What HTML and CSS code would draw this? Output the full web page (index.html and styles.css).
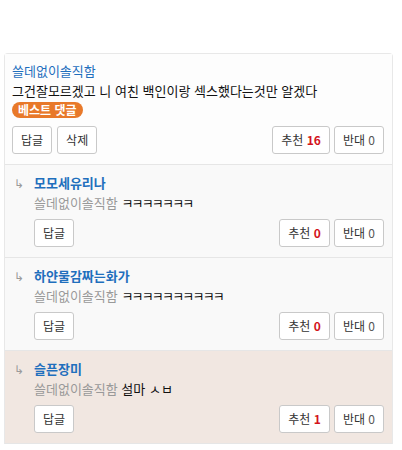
FILE: index.html
```html
<!DOCTYPE html>
<html lang="ko">
<head>
<meta charset="utf-8">
<link rel="stylesheet" href="styles.css">
</head>
<body>
<div class="card">
  <div class="comment best">
    <div class="name">쓸데없이솔직함</div>
    <div class="text">그건잘모르겠고 니 여친 백인이랑 섹스했다는것만 알겠다</div>
    <div class="badge-row"><span class="badge">베스트 댓글</span></div>
    <div class="actions">
      <div class="left">
        <button class="btn">답글</button>
        <button class="btn">삭제</button>
      </div>
      <div class="right">
        <button class="btn">추천 <b class="up">16</b></button>
        <button class="btn">반대 <span class="down">0</span></button>
      </div>
    </div>
  </div>

  <div class="comment reply">
    <div class="arrow">↳</div>
    <div class="body">
      <div class="name bold">모모세유리나</div>
      <div class="text"><span class="to">쓸데없이솔직함</span> <span class="jamo">ㅋㅋㅋㅋㅋㅋㅋ</span></div>
      <div class="actions">
        <div class="left"><button class="btn">답글</button></div>
        <div class="right">
          <button class="btn">추천 <b class="up">0</b></button>
          <button class="btn">반대 <span class="down">0</span></button>
        </div>
      </div>
    </div>
  </div>

  <div class="comment reply">
    <div class="arrow">↳</div>
    <div class="body">
      <div class="name bold">하얀물감짜는화가</div>
      <div class="text"><span class="to">쓸데없이솔직함</span> <span class="jamo">ㅋㅋㅋㅋㅋㅋㅋㅋㅋㅋ</span></div>
      <div class="actions">
        <div class="left"><button class="btn">답글</button></div>
        <div class="right">
          <button class="btn">추천 <b class="up">0</b></button>
          <button class="btn">반대 <span class="down">0</span></button>
        </div>
      </div>
    </div>
  </div>

  <div class="comment reply mine">
    <div class="arrow">↳</div>
    <div class="body">
      <div class="name bold">슬픈장미</div>
      <div class="text"><span class="to">쓸데없이솔직함</span> 설마 ㅅㅂ</div>
      <div class="actions">
        <div class="left"><button class="btn">답글</button></div>
        <div class="right">
          <button class="btn">추천 <b class="up">1</b></button>
          <button class="btn">반대 <span class="down">0</span></button>
        </div>
      </div>
    </div>
  </div>
</div>
</body>
</html>
```

FILE: styles.css
```css
* { box-sizing: border-box; }
html, body { margin: 0; padding: 0; background: #fff; }
body {
  font-family: "Noto Sans CJK KR", "Noto Sans", sans-serif;
  font-size: 13px;
  color: #222;
}
.card {
  margin: 53px 9px 0 4px;
  border: 1px solid #e8e8e8;
  border-bottom: none;
  border-radius: 4px 4px 0 0;
}
.comment {
  padding: 7px 8px 10px 7px;
  border-bottom: 1px solid #e6e6e6;
  background: #fdfdfd;
}
.reply {
  display: flex;
  padding-top: 8px;
  background: #f9f9f9;
}
.reply.mine { background: #f1e7e1; }
.arrow {
  width: 22px;
  flex: none;
  padding-left: 2px;
  line-height: 20px;
  color: #9a9a9a;
  font-size: 12px;
}
.body { flex: 1; }
.name {
  line-height: 20px;
  color: #1f6fbd;
  font-size: 13px;
}
.name.bold { font-weight: 700; }
.text { line-height: 20px; color: #111; }
.to { color: #999; }
.jamo { letter-spacing: -1.8px; }
.badge-row { margin-top: 1px; display: flex; }
.badge {
  display: inline-block;
  height: 16px;
  line-height: 16px;
  padding: 0 6px;
  border-radius: 8px;
  background: #e8792a;
  color: #fff;
  font-size: 12px;
  font-weight: 700;
}
.actions {
  display: flex;
  justify-content: space-between;
  margin-top: 8px;
}
.reply .actions { margin-top: 6px; }
.left, .right { display: flex; gap: 5px; }
.right { gap: 4px; }
.btn {
  height: 28px;
  padding: 0 8px;
  border: 1px solid #c9c9c9;
  border-radius: 3px;
  background: #fff;
  font-family: inherit;
  font-size: 12px;
  color: #333;
  line-height: 26px;
}
.up { color: #d3131c; font-weight: 700; }
.down { color: #555; }
```
